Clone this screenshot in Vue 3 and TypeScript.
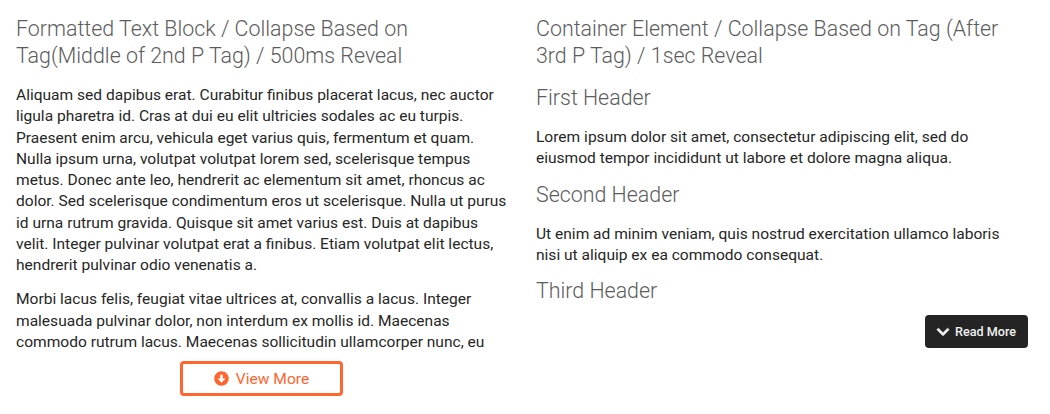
<script setup lang="ts">
const leftParas: string[] = [
  'Aliquam sed dapibus erat. Curabitur finibus placerat lacus, nec auctor ligula pharetra id. Cras at dui eu elit ultricies sodales ac eu turpis. Praesent enim arcu, vehicula eget varius quis, fermentum et quam. Nulla ipsum urna, volutpat volutpat lorem sed, scelerisque tempus metus. Donec ante leo, hendrerit ac elementum sit amet, rhoncus ac dolor. Sed scelerisque condimentum eros ut scelerisque. Nulla ut purus id urna rutrum gravida. Quisque sit amet varius est. Duis at dapibus velit. Integer pulvinar volutpat erat a finibus. Etiam volutpat elit lectus, hendrerit pulvinar odio venenatis a.',
  'Morbi lacus felis, feugiat vitae ultrices at, convallis a lacus. Integer malesuada pulvinar dolor, non interdum ex mollis id. Maecenas commodo rutrum lacus. Maecenas sollicitudin ullamcorper nunc, eu'
];

const sections = [
  { title: 'First Header', text: 'Lorem ipsum dolor sit amet, consectetur adipiscing elit, sed do eiusmod tempor incididunt ut labore et dolore magna aliqua.' },
  { title: 'Second Header', text: 'Ut enim ad minim veniam, quis nostrud exercitation ullamco laboris nisi ut aliquip ex ea commodo consequat.' },
  { title: 'Third Header', text: '' }
];
</script>

<template>
  <div class="page">
    <div class="col col-left">
      <h2>Formatted Text Block / Collapse Based on Tag(Middle of 2nd P Tag) / 500ms Reveal</h2>
      <p v-for="(para, i) in leftParas" :key="i">{{ para }}</p>
      <div class="more-wrap">
        <button class="view-more">
          <svg class="ico-down" viewBox="0 0 512 512" width="15" height="15">
            <path fill="currentColor" d="M504 256c0 137-111 248-248 248S8 393 8 256 119 8 256 8s248 111 248 248zM212 140v116h-70.900c-10.700 0-16.100 13-8.500 20.500l114.900 114.300c4.700 4.700 12.200 4.700 16.900 0l114.900-114.300c7.600-7.600 2.200-20.500-8.500-20.500H300V140c0-6.600-5.400-12-12-12h-64c-6.600 0-12 5.400-12 12z" />
          </svg>
          View More
        </button>
      </div>
    </div>
    <div class="col col-right">
      <h2>Container Element / Collapse Based on Tag (After 3rd P Tag) / 1sec Reveal</h2>
      <template v-for="s in sections" :key="s.title">
        <h3>{{ s.title }}</h3>
        <p v-if="s.text">{{ s.text }}</p>
      </template>
      <div class="read-wrap">
        <button class="read-more">
          <svg class="ico-chev" viewBox="0 0 448 512" width="14" height="14">
            <path fill="currentColor" stroke="currentColor" stroke-width="24" d="M207.029 381.476L12.686 187.132c-9.373-9.373-9.373-24.569 0-33.941l22.667-22.667c9.357-9.357 24.522-9.375 33.901-.04L224 284.505l154.745-154.021c9.379-9.335 24.544-9.317 33.901.04l22.667 22.667c9.373 9.373 9.373 24.569 0 33.941L240.971 381.476c-9.373 9.372-24.569 9.372-33.942 0z" />
          </svg>
          Read More
        </button>
      </div>
    </div>
  </div>
</template>

<style scoped>
.page {
  display: grid;
  grid-template-columns: 496px 492px;
  column-gap: 24px;
  padding: 15px 22px 0 16px;
  font-family: Roboto, "Liberation Sans", sans-serif;
  color: #262626;
}

h2 {
  margin: 0 0 16px;
  font-size: 21.4px;
  line-height: 27px;
  font-weight: 300;
  color: #5c5c5c;
}

.col-right h2 {
  margin-bottom: 15px;
}

h3 {
  margin: 0 0 16px;
  font-size: 21.4px;
  line-height: 27px;
  font-weight: 300;
  color: #5c5c5c;
}

p {
  margin: 0 0 13px;
  font-size: 15.55px;
  line-height: 21.25px;
}

.col-left h2 {
  padding-right: 6px;
}

.col-left p:last-of-type {
  margin-bottom: 0;
}

.col-right p {
  margin-bottom: 11px;
  padding-right: 10px;
}

.more-wrap {
  display: flex;
  justify-content: center;
  margin-top: 8px;
  padding-right: 5px;
}

.view-more {
  display: flex;
  align-items: center;
  justify-content: center;
  gap: 7px;
  width: 163px;
  height: 35px;
  box-sizing: border-box;
  border: 3px solid #ff652f;
  border-radius: 4px;
  background: #fff;
  color: #ff652f;
  font-family: inherit;
  font-size: 15.55px;
}

.read-wrap {
  display: flex;
  justify-content: flex-end;
  margin-top: -5px;
}

.read-more {
  display: flex;
  align-items: center;
  gap: 5px;
  height: 33px;
  padding: 0 12px 0 11.5px;
  border: none;
  border-radius: 4px;
  background: #242424;
  color: #f0f0f0;
  font-family: inherit;
  font-size: 12.6px;
  font-weight: 500;
}
</style>
